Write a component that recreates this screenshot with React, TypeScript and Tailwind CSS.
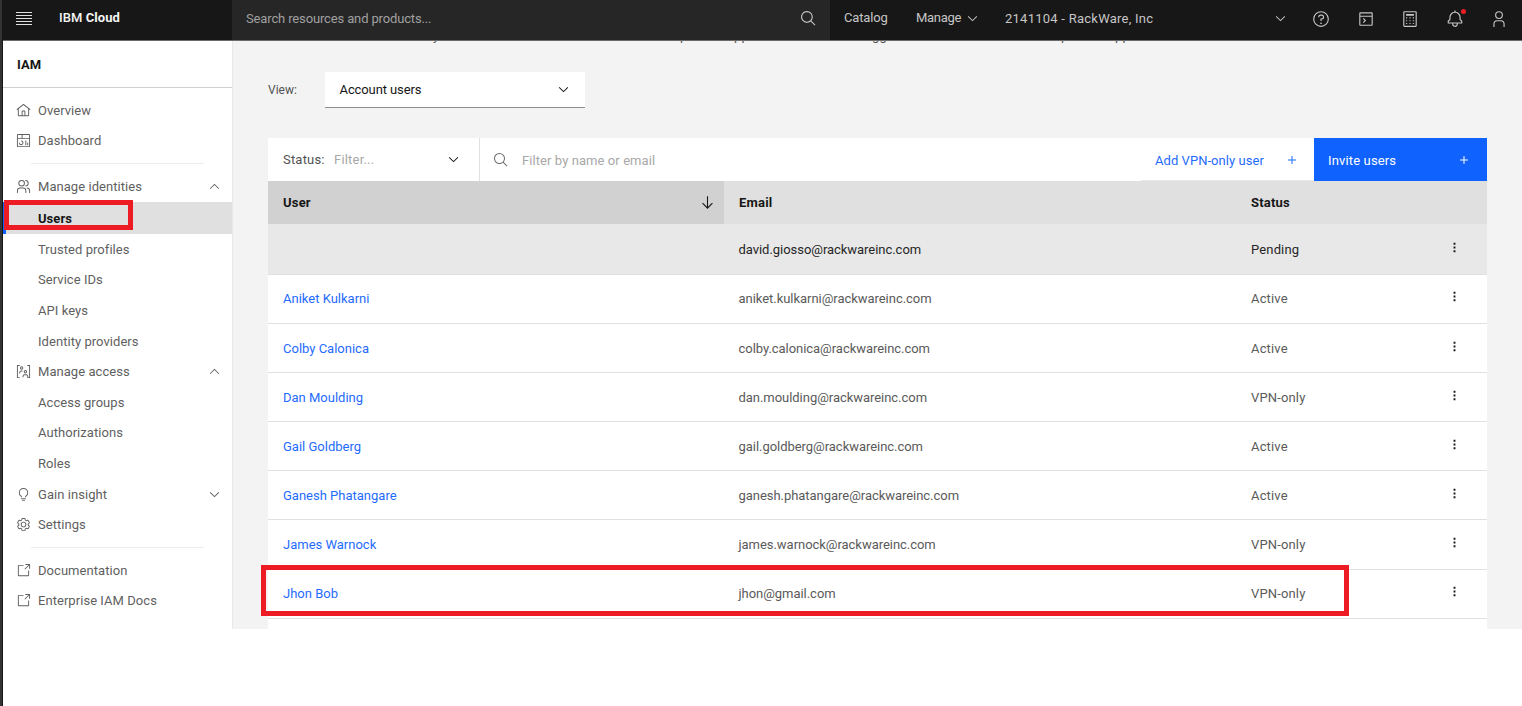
import React from 'react';
import clsx from 'clsx';

// 32x32 icon outlines
const icons = {
  home: 'M16.6123,2.2138a1.01,1.01,0,0,0-1.2427,0L1,13.4194l1.2427,1.5717L4,13.6209V26a2.0041,2.0041,0,0,0,2,2H26a2.0037,2.0037,0,0,0,2-2V13.63L29.7573,15,31,13.4282ZM18,26H14V18h4Zm2,0V18a2.0023,2.0023,0,0,0-2-2H14a2.002,2.002,0,0,0-2,2v8H6V12.0615l10-7.79,10,7.8005V26Z',
  dashboard: 'M24 21H26V26H24z M20 16H22V26H20z M11 26a5.0059 5.0059 0 01-5-5H8a3 3 0 103-3V16a5 5 0 010 10z M28 2H4A2.002 2.002 0 002 4V28a2.0023 2.0023 0 002 2H28a2.0027 2.0027 0 002-2V4A2.0023 2.0023 0 0028 2zm0 9H14V4H28zM12 4v7H4V4zM4 28V13H28.0007l.0013 15z',
  users: 'M30 30H28V25a5.0057 5.0057 0 00-5-5V18a7.0078 7.0078 0 017 7z M22 30H20V25a5.0059 5.0059 0 00-5-5H9a5.0059 5.0059 0 00-5 5v5H2V25a7.0082 7.0082 0 017-7h6a7.0082 7.0082 0 017 7z M20 2V4a5 5 0 010 10v2A7 7 0 0020 2z M12 4A5 5 0 117 9a5 5 0 015-5m0-2a7 7 0 107 7A7 7 0 0012 2z',
  idea: 'M11 24H21V26H11z M13 28H19V30H13z M16 2A10 10 0 006 12a9.19 9.19 0 003.46 7.62c1 .93 1.54 1.46 1.54 2.38h2c0-1.84-1.11-2.87-2.19-3.86A7.2 7.2 0 018 12a8 8 0 0116 0 7.2 7.2 0 01-2.82 6.14c-1.07 1-2.18 2-2.18 3.86h2c0-.92.53-1.45 1.54-2.39A9.18 9.18 0 0026 12 10 10 0 0016 2Z',
  settings: 'M27,16.76c0-.25,0-.5,0-.76s0-.51,0-.77l1.92-1.68A2,2,0,0,0,29.3,11L26.94,7a2,2,0,0,0-1.73-1,2,2,0,0,0-.64.1l-2.43.82a11.35,11.35,0,0,0-1.31-.75l-.51-2.52a2,2,0,0,0-2-1.61H13.64a2,2,0,0,0-2,1.61l-.51,2.52a11.48,11.48,0,0,0-1.32.75L7.43,6.06A2,2,0,0,0,6.79,6,2,2,0,0,0,5.06,7L2.7,11a2,2,0,0,0,.41,2.51L5,15.24c0,.25,0,.5,0,.76s0,.51,0,.77L3.11,18.45A2,2,0,0,0,2.7,21L5.06,25a2,2,0,0,0,1.73,1,2,2,0,0,0,.64-.1l2.43-.82a11.35,11.35,0,0,0,1.31.75l.51,2.52a2,2,0,0,0,2,1.61h4.72a2,2,0,0,0,2-1.61l.51-2.52a11.48,11.48,0,0,0,1.32-.75l2.42.82a2,2,0,0,0,.64.1,2,2,0,0,0,1.73-1L29.3,21a2,2,0,0,0-.41-2.51ZM25.21,24l-3.43-1.16a8.86,8.86,0,0,1-2.71,1.57L18.36,28H13.64l-.71-3.55a9.36,9.36,0,0,1-2.7-1.57L6.79,24,4.43,20l2.72-2.4a8.9,8.9,0,0,1,0-3.13L4.43,12,6.79,8l3.43,1.16a8.86,8.86,0,0,1,2.71-1.57L13.64,4h4.72l.71,3.55a9.36,9.36,0,0,1,2.7,1.57L25.21,8,27.57,12l-2.72,2.4a8.9,8.9,0,0,1,0,3.13L27.57,20Z M16,22a6,6,0,1,1,6-6A5.94,5.94,0,0,1,16,22Zm0-10a3.91,3.91,0,0,0-4,4,3.91,3.91,0,0,0,4,4,3.91,3.91,0,0,0,4-4A3.91,3.91,0,0,0,16,12Z',
  launch: 'M26,28H6a2.0027,2.0027,0,0,1-2-2V6A2.0027,2.0027,0,0,1,6,4H16V6H6V26H26V16h2V26A2.0027,2.0027,0,0,1,26,28Z M20 2 20 4 26.586 4 18 12.586 19.414 14 28 5.414 28 12 30 12 30 2 20 2z',
  access: 'M8 30H2V2h6v2H4v24h4z M24 2h6v28h-6v-2h4V4h-4z M12 5a3.5 3.5 0 100 7 3.5 3.5 0 000-7zm0 2a1.5 1.5 0 110 3 1.5 1.5 0 010-3z M7 20v-2a4 4 0 014-4h3v2h-3a2 2 0 00-2 2v2z M20 13a3.5 3.5 0 100 7 3.5 3.5 0 000-7zm0 2a1.5 1.5 0 110 3 1.5 1.5 0 010-3z M14 28v-2a4 4 0 014-4h4a4 4 0 014 4v2h-2v-2a2 2 0 00-2-2h-4a2 2 0 00-2 2v2z',
  search: 'M29,27.5859l-7.5521-7.5521a11.0177,11.0177,0,1,0-1.4141,1.4141L27.5859,29ZM4,13a9,9,0,1,1,9,9A9.01,9.01,0,0,1,4,13Z',
  add: 'M17 15L17 8 15 8 15 15 8 15 8 17 15 17 15 24 17 24 17 17 24 17 24 15z',
  chevronDown: 'M16 22L6 12 7.4 10.6 16 19.2 24.6 10.6 26 12z',
  chevronUp: 'M16 10L26 20 24.6 21.4 16 12.8 7.4 21.4 6 20z',
  arrowDown: 'M24.59 16.59 17 24.17 17 4 15 4 15 24.17 7.41 16.59 6 18 16 28 26 18 24.59 16.59z',
  help: 'M16,2A14,14,0,1,0,30,16,14,14,0,0,0,16,2Zm0,26A12,12,0,1,1,28,16,12,12,0,0,1,16,28Z M16 22a1.5 1.5 0 100 3 1.5 1.5 0 000-3z M17,8H15.5A4.49,4.49,0,0,0,11,12.5V13h2v-.5A2.5,2.5,0,0,1,15.5,10H17a2.5,2.5,0,0,1,0,5H15v4.5h2V17a4.5,4.5,0,0,0,0-9Z',
  terminal: 'M26 4H6a2 2 0 00-2 2v20a2 2 0 002 2h20a2 2 0 002-2V6a2 2 0 00-2-2zm0 2v4H6V6zM6 26V12h20v14z M11.8 14.2L16.2 18.6 11.8 23 10.4 21.6 13.4 18.6 10.4 15.6z',
  calculator: 'M26 2H6a2 2 0 00-2 2v24a2 2 0 002 2h20a2 2 0 002-2V4a2 2 0 00-2-2zm0 26H6V4h20z M9 7h14v3H9z M9 13h2v2H9z M15 13h2v2h-2z M21 13h2v2h-2z M9 18h2v2H9z M15 18h2v2h-2z M21 18h2v2h-2z M9 23h2v2H9z M15 23h2v2h-2z M21 23h2v2h-2z',
  bell: 'M28.7071,19.293,26,16.5859V13a10.0136,10.0136,0,0,0-9-9.9492V1H15V3.0508A10.0136,10.0136,0,0,0,6,13v3.5859L3.2929,19.293A1,1,0,0,0,3,20v3a1,1,0,0,0,1,1h7v.7768a5.152,5.152,0,0,0,4.5,5.1987A5.0057,5.0057,0,0,0,21,25V24h7a1,1,0,0,0,1-1V20A1,1,0,0,0,28.7071,19.293ZM19,25a3,3,0,0,1-6,0V24h6Zm8-3H5V20.4141L7.707,17.707A1,1,0,0,0,8,17V13a8,8,0,0,1,16,0v4a1,1,0,0,0,.293.707L27,20.4141Z',
  user: 'M16 4a5 5 0 11-5 5 5 5 0 015-5m0-2a7 7 0 107 7A7 7 0 0016 2zM26 30H24V25a5 5 0 00-5-5H13a5 5 0 00-5 5v5H6V25a7 7 0 017-7h6a7 7 0 017 7z',
  overflow: 'M14 6h4v4h-4z M14 14h4v4h-4z M14 22h4v4h-4z',
};

type IconName = keyof typeof icons;

function Icon({ name, className }: { name: IconName; className?: string }) {
  return (
    <svg viewBox="0 0 32 32" fill="currentColor" fillRule="evenodd" className={clsx('shrink-0', className)}>
      <path d={icons[name]} />
    </svg>
  );
}

interface NavItemProps {
  label: string;
  icon?: IconName;
  chevron?: 'up' | 'down';
}

function NavItem({ label, icon, chevron }: NavItemProps) {
  return (
    <div className="flex h-[30.6px] items-center pr-[10px] pl-[13px]">
      <div className="w-[22px]">{icon && <Icon name={icon} className="-mt-px h-[15px] w-[15px]" />}</div>
      <span className="flex-1">{label}</span>
      {chevron && <Icon name={chevron === 'up' ? 'chevronUp' : 'chevronDown'} className="-mt-px h-[15px] w-[15px]" />}
    </div>
  );
}

const rows = [
  { user: '', email: 'david.giosso@rackwareinc.com', status: 'Pending' },
  { user: 'Aniket Kulkarni', email: 'aniket.kulkarni@rackwareinc.com', status: 'Active' },
  { user: 'Colby Calonica', email: 'colby.calonica@rackwareinc.com', status: 'Active' },
  { user: 'Dan Moulding', email: 'dan.moulding@rackwareinc.com', status: 'VPN-only' },
  { user: 'Gail Goldberg', email: 'gail.goldberg@rackwareinc.com', status: 'Active' },
  { user: 'Ganesh Phatangare', email: 'ganesh.phatangare@rackwareinc.com', status: 'Active' },
  { user: 'James Warnock', email: 'james.warnock@rackwareinc.com', status: 'VPN-only' },
  { user: 'Jhon Bob', email: 'jhon@gmail.com', status: 'VPN-only' },
];

function Header() {
  return (
    <header className="flex h-[41px] shrink-0 items-center border-b border-[#6b6b6b] bg-[#171717] pb-[3px] text-[#c6c6c6]">
      <div className="flex w-[229px] items-center pl-[13px]">
        {/* Menu button */}
        <div className="flex w-[16px] flex-col gap-[2px]">
          <div className="h-px bg-[#e0e0e0]" />
          <div className="h-px bg-[#e0e0e0]" />
          <div className="h-px bg-[#e0e0e0]" />
          <div className="h-px bg-[#e0e0e0]" />
          <div className="h-px bg-[#e0e0e0]" />
        </div>
        <div className="ml-[27px] pb-px tracking-[0.05px] text-[#f4f4f4]">
          <span className="font-medium">IBM</span> <span className="font-bold">Cloud</span>
        </div>
      </div>
      <div className="-mb-[3px] flex h-10 w-[598px] items-center bg-[#262626] pr-[13px] pb-[3px] pl-[14px]">
        <span className="flex-1 tracking-[-0.14px] text-[#a0a0a0]">Search resources and products...</span>
        <Icon name="search" className="h-[17px] w-[17px]" />
      </div>
      <span className="ml-[14px] w-[72px] pb-px tracking-[-0.15px]">Catalog</span>
      <span className="w-[49px] pb-px tracking-[-0.3px]">Manage</span>
      <Icon name="chevronDown" className="h-[15px] w-[15px]" />
      <span className="ml-[25px] flex-1 tracking-[0.25px]">2141104 - RackWare, Inc</span>
      <Icon name="chevronDown" className="mr-[24px] h-[15px] w-[15px]" />
      <div className="flex items-center gap-[26.5px] pr-[14px]">
        <Icon name="help" className="h-[18px] w-[18px]" />
        <Icon name="terminal" className="h-[18px] w-[18px]" />
        <Icon name="calculator" className="h-[18px] w-[18px]" />
        <div className="relative">
          <Icon name="bell" className="h-[18px] w-[18px]" />
          <div className="absolute -top-[1px] -right-[2px] h-[5px] w-[5px] rounded-full bg-[#ee1c24]" />
        </div>
        <Icon name="user" className="h-[18px] w-[18px]" />
      </div>
    </header>
  );
}

function Sidebar() {
  return (
    <aside className="w-[230px] shrink-0 border-r border-[#e8e8e8] bg-white tracking-[0.05px] text-[#5f5f5f]">
      <div className="flex h-[47px] items-center border-b border-[#cfcfcf] pt-px pl-[14px] font-bold text-[#161616]">IAM</div>
      <div className="pt-[7.5px]">
        <NavItem label="Overview" icon="home" />
        <NavItem label="Dashboard" icon="dashboard" />
        <div className="mt-[6px] mr-[28px] mb-[8px] ml-[28px] h-px bg-[#ececec]" />
        <NavItem label="Manage identities" icon="users" chevron="up" />
        <div className="-mt-[0.5px] mb-[0.8px] flex h-[32px] items-center border-l-[3px] border-[#0f62fe] bg-[#e0e0e0] pt-[2px] pl-[32px] font-bold text-[#161616]">
          Users
        </div>
        <NavItem label="Trusted profiles" />
        <NavItem label="Service IDs" />
        <NavItem label="API keys" />
        <NavItem label="Identity providers" />
        <NavItem label="Manage access" icon="access" chevron="up" />
        <NavItem label="Access groups" />
        <NavItem label="Authorizations" />
        <NavItem label="Roles" />
        <NavItem label="Gain insight" icon="idea" chevron="down" />
        <NavItem label="Settings" icon="settings" />
        <div className="mt-[6px] mr-[28px] mb-[8px] ml-[28px] h-px bg-[#ececec]" />
        <NavItem label="Documentation" icon="launch" />
        <NavItem label="Enterprise IAM Docs" icon="launch" />
      </div>
    </aside>
  );
}

function UsersTable() {
  return (
    <div className="h-[492px] w-[1219px] bg-white">
      {/* Toolbar */}
      <div className="flex h-[43px] items-center">
        <div className="flex h-full w-[212px] items-center border-r border-[#e0e0e0] pr-[18px] pl-[15px]">
          <span className="w-[51px] text-[#525252]">Status:</span>
          <span className="flex-1 pt-px text-[#a8a8a8]">Filter...</span>
          <Icon name="chevronDown" className="h-[15px] w-[15px] text-[#161616]" />
        </div>
        <Icon name="search" className="ml-[13px] h-[16px] w-[16px] text-[#6f6f6f]" />
        <span className="ml-[13px] flex-1 pt-[2px] tracking-[0.08px] text-[#a8a8a8]">Filter by name or email</span>
        <div className="flex h-full w-[173px] items-center justify-between border-b border-[#e8e8e8] pt-px pr-[14px] pl-[14px] tracking-[0.05px] text-[#1f6bfe]">
          <span className="pt-[2px]">Add VPN-only user</span>
          <Icon name="add" className="h-[16px] w-[16px]" />
        </div>
        <div className="flex h-full w-[173px] items-center justify-between bg-[#0f62fe] pr-[15px] pl-[14px] tracking-[0.15px] text-white">
          <span className="pt-[2px]">Invite users</span>
          <Icon name="add" className="h-[16px] w-[16px]" />
        </div>
      </div>
      <div className="flex h-[43px] items-center bg-[#e0e0e0] font-bold text-[#161616]">
        <div className="flex h-full w-[456px] items-center justify-between bg-[#d1d1d1] pr-[8px] pl-[15px]">
          User
          <Icon name="arrowDown" className="h-[17px] w-[17px]" />
        </div>
        <div className="w-[512px] pl-[15px]">Email</div>
        <div className="pl-[15px]">Status</div>
      </div>
      {rows.map((row) => (
        <div
          key={row.email}
          className={clsx(
            'flex items-center border-b border-[#e0e0e0] pt-[1.5px]',
            row.user ? 'h-[49.2px] text-[#5a5a5a]' : 'h-[50.5px] bg-[#e8e8e8] text-[#262626]'
          )}
        >
          <div className="w-[456px] pl-[15px] tracking-[0px] text-[#1f6bfe]">{row.user}</div>
          <div className="w-[512px] pl-[14.5px] tracking-[-0.04px]">{row.email}</div>
          <div className="w-[211px] pl-[15px] tracking-[0.15px]">{row.status}</div>
          <Icon name="overflow" className="mb-[5px] h-[15px] w-[15px] text-[#161616]" />
        </div>
      ))}
    </div>
  );
}

export default function App() {
  return (
    <div className="relative flex h-[706px] w-[1522px] overflow-hidden bg-white font-['Roboto','Liberation_Sans',sans-serif] text-[13px] leading-[18px] tracking-[0.2px]">
      <div className="w-[3px] shrink-0 border-r border-[#171717] bg-[#333333]" />
      <div className="flex min-w-0 flex-1 flex-col">
        <Header />
        <div className="flex h-[588px]">
          <Sidebar />
          <main className="flex-1 overflow-hidden bg-[#f3f3f3] pl-[35px]">
            {/* Tail of the intro paragraph scrolled under the header */}
            <div className="flex h-[2px] items-end overflow-hidden text-[#525252]">
              <div className="-mb-[2px] flex">
                <span className="ml-[165px] w-[247px]">y</span>
                <span className="w-[54px]">p</span>
                <span className="w-[138px]">pp</span>
                <span className="w-[189px]">gg</span>
                <span className="w-[54px]">p</span>
                <span>pp</span>
              </div>
            </div>
            <div className="flex items-center pt-[29px]">
              <span className="w-[57px] text-[12px] tracking-[0px] text-[#525252]">View:</span>
              <div className="flex h-[36px] w-[260px] items-center justify-between border-b border-[#8d8d8d] bg-white pr-[14px] pl-[14.5px] tracking-[-0.1px] text-[#161616]">
                Account users
                <Icon name="chevronDown" className="h-[15px] w-[15px]" />
              </div>
            </div>
            <div className="mt-[30px]">
              <UsersTable />
            </div>
          </main>
        </div>
      </div>

      {/* Highlight boxes */}
      <div className="absolute top-[200px] left-[4px] h-[30px] w-[129px] border-[5px] border-[#ed1c24]" />
      <div className="absolute top-[565px] left-[261px] h-[51px] w-[1088px] border-[5px] border-[#ed1c24]" />
    </div>
  );
}
